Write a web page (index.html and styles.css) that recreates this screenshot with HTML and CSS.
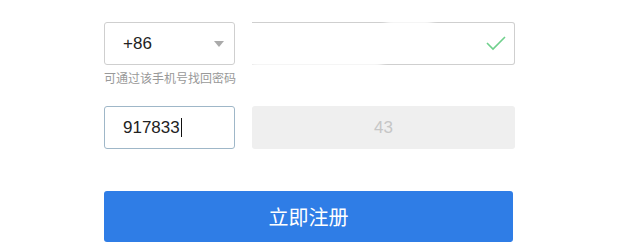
FILE: index.html
```html
<!DOCTYPE html>
<html lang="zh-CN">
<head>
    <meta charset="UTF-8">
    <title>注册</title>
    <link rel="stylesheet" href="styles.css">
</head>
<body>
    <form class="register">
        <div class="row">
            <div class="select">
                <span>+86</span>
                <span class="arrow"></span>
            </div>
            <div class="phone">
                <svg class="check" width="20" height="15" viewBox="0 0 20 15">
                    <polyline points="1,7 7,13 19,1" fill="none" stroke="#6fd08c" stroke-width="1.6"/>
                </svg>
                <!-- blurred-out part of the reference -->
                <div class="mask mask-bottom"></div>
                <div class="mask mask-top"></div>
            </div>
        </div>
        <p class="hint">可通过该手机号找回密码</p>

        <div class="row code-row">
            <div class="code">917833<span class="caret"></span></div>
            <div class="countdown">43</div>
        </div>

        <button type="button" class="submit">立即注册</button>
    </form>
</body>
</html>
```

FILE: styles.css
```css
* {
    margin: 0;
    padding: 0;
    box-sizing: border-box;
}

body {
    background: #fff;
    font-family: 'Liberation Sans', 'Noto Sans CJK SC', sans-serif;
    color: #222;
}

.register {
    width: 411px;
    margin: 22px 0 0 104px;
}

.row {
    display: flex;
    gap: 17px;
    height: 43px;
}

.select {
    width: 131px;
    border: 1px solid #cfcfcf;
    border-radius: 3px;
    display: flex;
    align-items: center;
    justify-content: space-between;
    padding: 0 10px 0 18px;
    font-size: 17px;
}

.arrow {
    width: 0;
    height: 0;
    border-left: 5px solid transparent;
    border-right: 5px solid transparent;
    border-top: 6px solid #aaa;
}

.phone {
    flex: 1;
    position: relative;
    border: 1px solid #cfcfcf;
    border-left: none;
    border-radius: 0 3px 3px 0;
    display: flex;
    align-items: center;
    justify-content: flex-end;
    padding-right: 8px;
}

.mask {
    position: absolute;
    background: #fff;
    filter: blur(3px);
}

.mask-bottom {
    left: -2px;
    bottom: -4px;
    width: 132px;
    height: 8px;
}

.mask-top {
    left: 134px;
    top: -4px;
    width: 46px;
    height: 8px;
}

.hint {
    margin: 5px 0 20px;
    font-family: 'Noto Sans CJK SC', sans-serif;
    font-size: 12px;
    line-height: 16px;
    color: #999;
}

.code {
    width: 131px;
    border: 1px solid #9fb7c8;
    border-radius: 3px;
    display: flex;
    align-items: center;
    padding-left: 18px;
    font-size: 17px;
}

.caret {
    display: inline-block;
    width: 1px;
    height: 19px;
    background: #111;
    margin-left: 1px;
}

.countdown {
    flex: 1;
    background: #efefef;
    border-radius: 3px;
    display: flex;
    align-items: center;
    justify-content: center;
    font-size: 17px;
    color: #c6c6c6;
}

.submit {
    display: block;
    width: 409px;
    height: 51px;
    margin-top: 42px;
    border: none;
    border-radius: 3px;
    background: #2f7de6;
    color: #fff;
    font-family: 'Noto Sans CJK SC', sans-serif;
    font-size: 20px;
}
```
